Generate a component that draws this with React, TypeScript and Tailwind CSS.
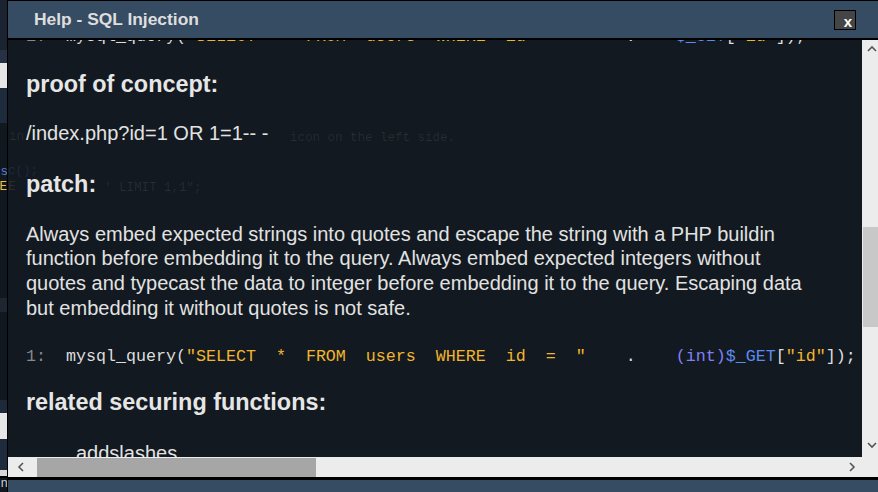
import React from "react";

const mono = { fontFamily: '"Liberation Mono", "DejaVu Sans Mono", monospace' };

function CodeLine({ withInt }: { withInt: boolean }) {
  return (
    <div
      className="whitespace-pre text-[16.67px] leading-[24px] text-[#dedede]"
      style={mono}
    >
      <span className="text-[#8a8a8a]">1:</span>
      <span>{"  mysql_query("}</span>
      <span className="text-[#f2b52c]">{'"SELECT  *  FROM  users  WHERE  id  =  "'}</span>
      <span>{"    .    "}</span>
      {withInt && <span className="text-[#8080f2]">(int)</span>}
      <span className="text-[#5b8cf0]">$_GET</span>
      <span>[</span>
      <span className="text-[#f2b52c]">"id"</span>
      <span>]);</span>
    </div>
  );
}

function ChevronUp() {
  return (
    <svg width="10" height="7" viewBox="0 0 10 7">
      <path d="M1 6 L5 2 L9 6" fill="none" stroke="#555" strokeWidth="1.6" />
    </svg>
  );
}
function ChevronDown() {
  return (
    <svg width="10" height="7" viewBox="0 0 10 7">
      <path d="M1 1 L5 5 L9 1" fill="none" stroke="#555" strokeWidth="1.6" />
    </svg>
  );
}
function ChevronLeft() {
  return (
    <svg width="7" height="10" viewBox="0 0 7 10">
      <path d="M6 1 L2 5 L6 9" fill="none" stroke="#555" strokeWidth="1.6" />
    </svg>
  );
}
function ChevronRight() {
  return (
    <svg width="7" height="10" viewBox="0 0 7 10">
      <path d="M1 1 L5 5 L1 9" fill="none" stroke="#555" strokeWidth="1.6" />
    </svg>
  );
}

export default function App() {
  const sans = { fontFamily: '"Liberation Sans", Arial, sans-serif' };
  return (
    <div className="flex h-[492px] w-[878px] overflow-hidden bg-[#121820]" style={sans}>
      {/* page behind the dialog (left strip) */}
      <div className="flex w-[7px] shrink-0 flex-col overflow-hidden" style={mono}>
        <div className="h-[50px] bg-[#1b2331]" />
        <div className="h-[13px] bg-[#263244]" />
        <div className="h-[25px] bg-[#e6e6e6]" />
        <div className="h-[35px] bg-[#1e2b3c]" />
        <div className="relative h-[175px] bg-[#121820]">
          <span className="absolute right-[-1px] top-[40px] text-[12.5px] text-[#5b7fd0]">s</span>
          <span className="absolute right-[0px] top-[55px] text-[12.5px] text-[#f0c040]">E</span>
        </div>
        <div className="h-[14px] bg-[#1e2632]" />
        <div className="h-[88px] bg-[#121820]" />
        <div className="h-[13px] bg-[#1e2a39]" />
        <div className="h-[26px] bg-[#e6e6e6]" />
        <div className="h-[31px] bg-[#1e2b3c]" />
        <div className="h-[6px] bg-[#d8d8d8]" />
        <div className="h-[2px] bg-black" />
        <div className="relative h-[14px] bg-[#121820]">
          <span className="absolute right-[-1px] top-[-3px] text-[12.5px] text-[#cfcfcf]">n</span>
        </div>
      </div>

      {/* dialog */}
      <div className="flex flex-1 flex-col border-l border-t border-black">
        {/* title bar */}
        <div className="flex h-[37px] shrink-0 items-center justify-between bg-[#364c63] pl-[26px] pr-[22px]">
          <span className="text-[17.4px] font-bold text-[#dedede]">Help - SQL Injection</span>
          <div className="mt-[1px] flex h-[20px] w-[22px] items-end justify-end border border-black bg-[#454545] pb-[1px] pr-[3px]">
            <span className="text-[15px] font-bold leading-[13px] text-white">x</span>
          </div>
        </div>
        <div className="h-[2px] shrink-0 bg-black" />

        {/* body */}
        <div className="flex h-[417px] shrink-0">
          <div className="relative flex-1 overflow-hidden bg-[#121920]">
            {/* faint page text showing through */}
            <div className="pointer-events-none absolute inset-0 text-[12.5px] text-white/[0.09]" style={mono}>
              <span className="absolute left-[1px] top-[88px]">in</span>
              <span className="absolute left-[282px] top-[89px] whitespace-pre">icon on the left side.</span>
              <span className="absolute left-[0px] top-[122px] text-[#5b7fd0]/[0.18]">c();</span>
              <span className="absolute left-[0px] top-[138px] text-[#f0c040]/[0.14]">E</span>
              <span className="absolute left-[96px] top-[139px] whitespace-pre">' LIMIT 1,1";</span>
            </div>

            <div className="relative flex flex-col whitespace-nowrap pl-[18px] text-[#e2e2e2]">
              <div className="mt-[-15.5px]">
                <CodeLine withInt={false} />
              </div>
              <h3 className="mt-[21px] text-[23.4px] font-bold leading-[28px] text-[#e6e6e6]">
                proof of concept:
              </h3>
              <p className="mt-[23.5px] text-[20px] leading-[24px]">/index.php?id=1 OR 1=1-- -</p>
              <h3 className="mt-[24.5px] text-[23.4px] font-bold leading-[28px] text-[#e6e6e6]">patch:</h3>
              <p className="mt-[24px] text-[20px] leading-[24.7px]">
                Always embed expected strings into quotes and escape the string with a PHP buildin
                <br />
                function before embedding it to the query. Always embed expected integers without
                <br />
                quotes and typecast the data to integer before embedding it to the query. Escaping data
                <br />
                but embedding it without quotes is not safe.
              </p>
              <div className="mt-[24.4px]">
                <CodeLine withInt={true} />
              </div>
              <h3 className="mt-[19.5px] text-[23.4px] font-bold leading-[28px] text-[#e6e6e6]">
                related securing functions:
              </h3>
              <ul className="mt-[24.5px] pl-[50px] text-[20px] leading-[24px]">
                <li>addslashes</li>
              </ul>
            </div>
          </div>

          {/* vertical scrollbar */}
          <div className="flex w-[16px] shrink-0 flex-col bg-[#ececec]">
            <div className="flex h-[17px] items-center justify-center pl-[4px]">
              <ChevronUp />
            </div>
            <div className="mt-[170px] ml-[1px] h-[100px] bg-[#c8c8c8]" />
            <div className="flex-1" />
            <div className="flex h-[17px] items-start justify-center pl-[4px] pt-[2px]">
              <ChevronDown />
            </div>
          </div>
        </div>

        {/* horizontal scrollbar */}
        <div className="flex h-[20px] shrink-0 items-stretch bg-[#ececec]">
          <div className="flex w-[22px] items-center justify-center pl-[2px]">
            <ChevronLeft />
          </div>
          <div className="mt-[1px] ml-[7px] w-[279px] bg-[#a6a6a6]" />
          <div className="flex-1" />
          <div className="flex w-[30px] items-center justify-start pl-[1px]">
            <ChevronRight />
          </div>
        </div>
        <div className="h-[3px] shrink-0 bg-black" />
        <div className="flex-1 bg-[#364c63]" />
      </div>
    </div>
  );
}
